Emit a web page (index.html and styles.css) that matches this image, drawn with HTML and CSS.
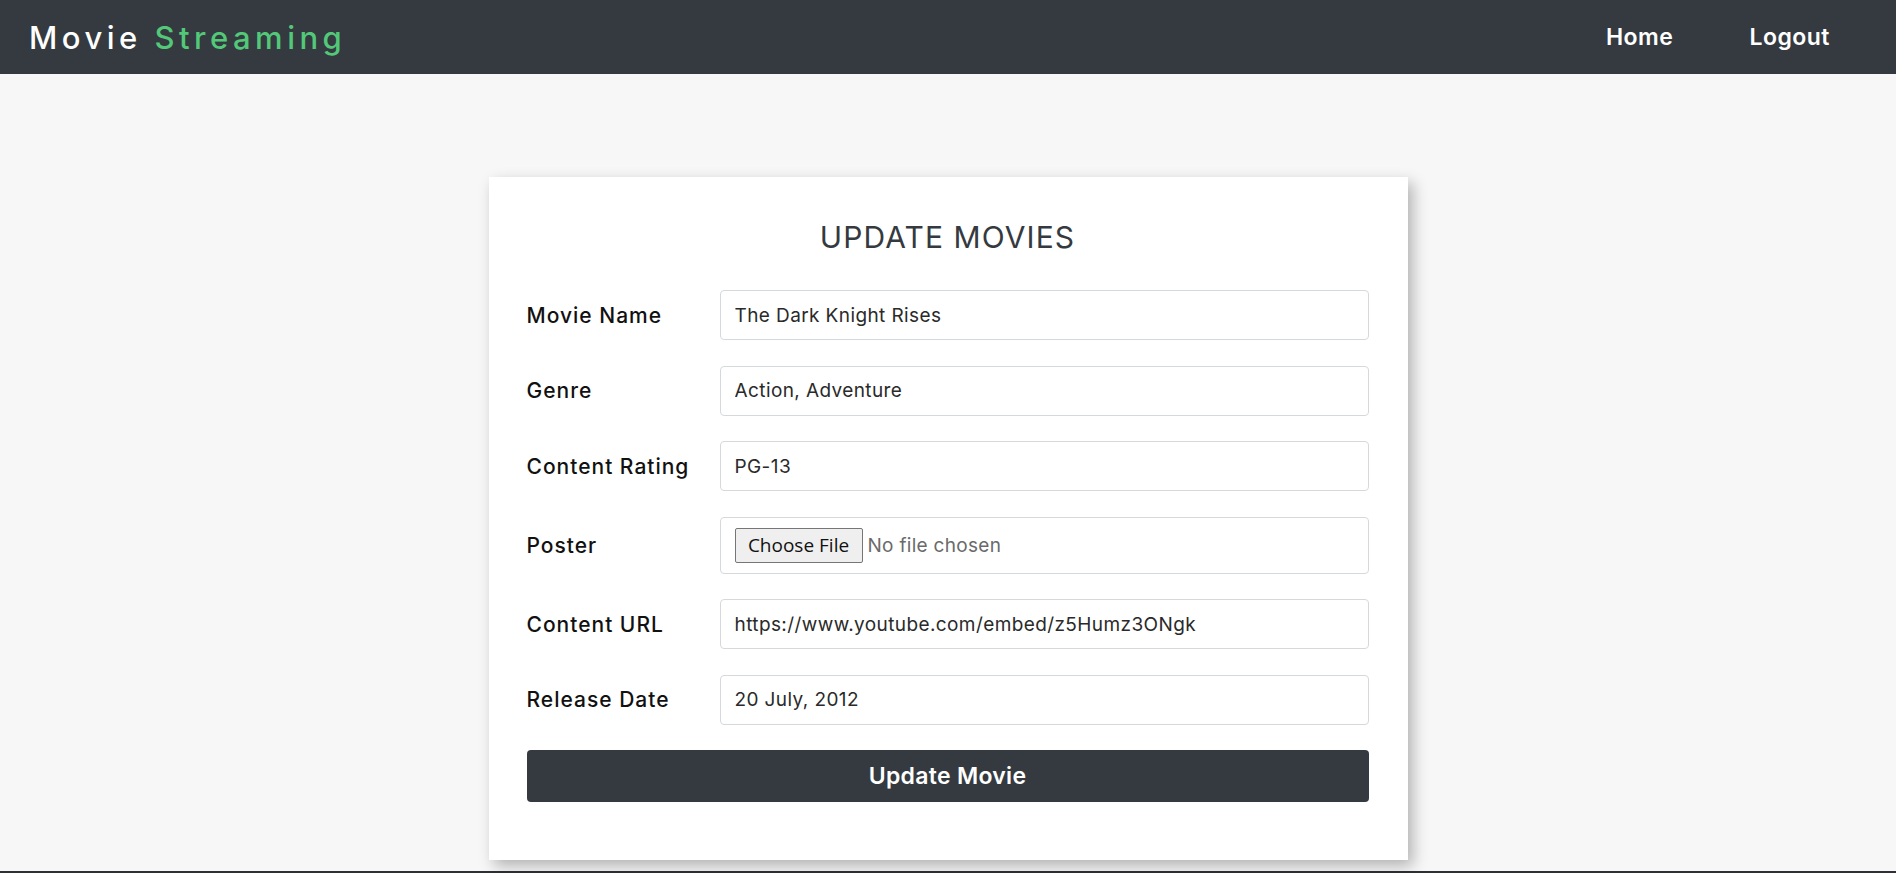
FILE: index.html
```html
<!DOCTYPE html>
<html lang="en">
<head>
<meta charset="utf-8">
<title>Update Movie</title>
<link rel="stylesheet" href="styles.css">
</head>
<body>
<header class="navbar">
  <a class="brand" href="#">Movie <span class="brand-accent">Streaming</span></a>
  <nav class="nav-links">
    <a class="nav-link" href="#">Home</a>
    <a class="nav-link" href="#">Logout</a>
  </nav>
</header>
<main class="page">
  <section class="card">
    <h1 class="card-title">UPDATE MOVIES</h1>
    <form class="movie-form">
      <div class="form-row">
        <label class="form-label" for="name">Movie Name</label>
        <input class="form-input" id="name" type="text" value="The Dark Knight Rises">
      </div>
      <div class="form-row">
        <label class="form-label" for="genre">Genre</label>
        <input class="form-input" id="genre" type="text" value="Action, Adventure">
      </div>
      <div class="form-row">
        <label class="form-label" for="rating">Content Rating</label>
        <input class="form-input" id="rating" type="text" value="PG-13">
      </div>
      <div class="form-row">
        <label class="form-label" for="poster">Poster</label>
        <div class="file-box">
          <span class="file-button">Choose File</span>
          <span class="file-text">No file chosen</span>
        </div>
      </div>
      <div class="form-row">
        <label class="form-label" for="url">Content URL</label>
        <input class="form-input" id="url" type="text" value="https://www.youtube.com/embed/z5Humz3ONgk">
      </div>
      <div class="form-row">
        <label class="form-label" for="date">Release Date</label>
        <input class="form-input" id="date" type="text" value="20 July, 2012">
      </div>
      <button class="submit-btn" type="button">Update Movie</button>
    </form>
  </section>
</main>
<footer class="footer"></footer>
</body>
</html>
```

FILE: styles.css
```css
* { box-sizing: border-box; }

html, body {
  margin: 0;
  padding: 0;
}

body {
  background: #f7f7f7;
  font-family: Inter, "Open Sans", sans-serif;
  color: #111;
  overflow: hidden;
}

.navbar {
  height: 74px;
  background: #343a40;
  display: flex;
  align-items: center;
  justify-content: space-between;
  padding: 0 28px 0 29px;
}

.brand {
  color: #ffffff;
  text-decoration: none;
  font-size: 31px;
  font-weight: 500;
  letter-spacing: 4.5px;
}

.brand-accent {
  color: #52c878;
}

.nav-links {
  display: flex;
}

.nav-link {
  color: #ffffff;
  text-decoration: none;
  font-size: 23px;
  font-weight: 600;
  padding: 0 38px;
  letter-spacing: 0.5px;
}

.page {
  padding: 103px 0 11px;
  display: flex;
  justify-content: center;
}

.card {
  width: 919px;
  height: 683px;
  background: #ffffff;
  box-shadow: 5px 6px 14px rgba(0, 0, 0, 0.28);
  padding: 38px 39px 0 38px;
}

.card-title {
  margin: 0;
  text-align: center;
  font-size: 30px;
  font-weight: 400;
  color: #343a40;
  letter-spacing: 1.1px;
  line-height: 40px;
  padding-top: 2px;
  margin-bottom: 33px;
}

.movie-form {
  display: flex;
  flex-direction: column;
  gap: 25.5px;
}

.form-row {
  display: grid;
  grid-template-columns: 193px 1fr;
  align-items: center;
}

.form-label {
  font-size: 21px;
  font-weight: 500;
  color: #111;
  letter-spacing: 1px;
}

.form-input {
  height: 50px;
  border: 1px solid #d6d9dc;
  border-radius: 4px;
  padding: 0 14px;
  font-family: Inter, "Open Sans", sans-serif;
  font-size: 19px;
  color: #2a2a2a;
  letter-spacing: 0.4px;
  background: #fff;
}

.file-box {
  height: 57px;
  border: 1px solid #d6d9dc;
  border-radius: 4px;
  padding: 0 14px;
  display: flex;
  align-items: center;
  gap: 5px;
  background: #fff;
}

.file-button {
  font-family: "Open Sans", "Noto Sans", sans-serif;
  font-size: 19px;
  color: #111;
  background: #efefef;
  border: 1px solid #767676;
  border-radius: 2px;
  height: 35px;
  width: 128px;
  display: flex;
  align-items: center;
  justify-content: center;
}

.file-text {
  font-size: 19px;
  color: #6a6a6a;
  font-weight: 400;
  letter-spacing: 0.3px;
}

.submit-btn {
  height: 52px;
  margin-top: 0;
  background: #343a40;
  color: #fff;
  border: none;
  border-radius: 4px;
  font-family: Inter, "Open Sans", sans-serif;
  font-size: 23px;
  font-weight: 600;
  letter-spacing: 0.3px;
}

.footer {
  height: 60px;
  background: #2d3035;
}
```
